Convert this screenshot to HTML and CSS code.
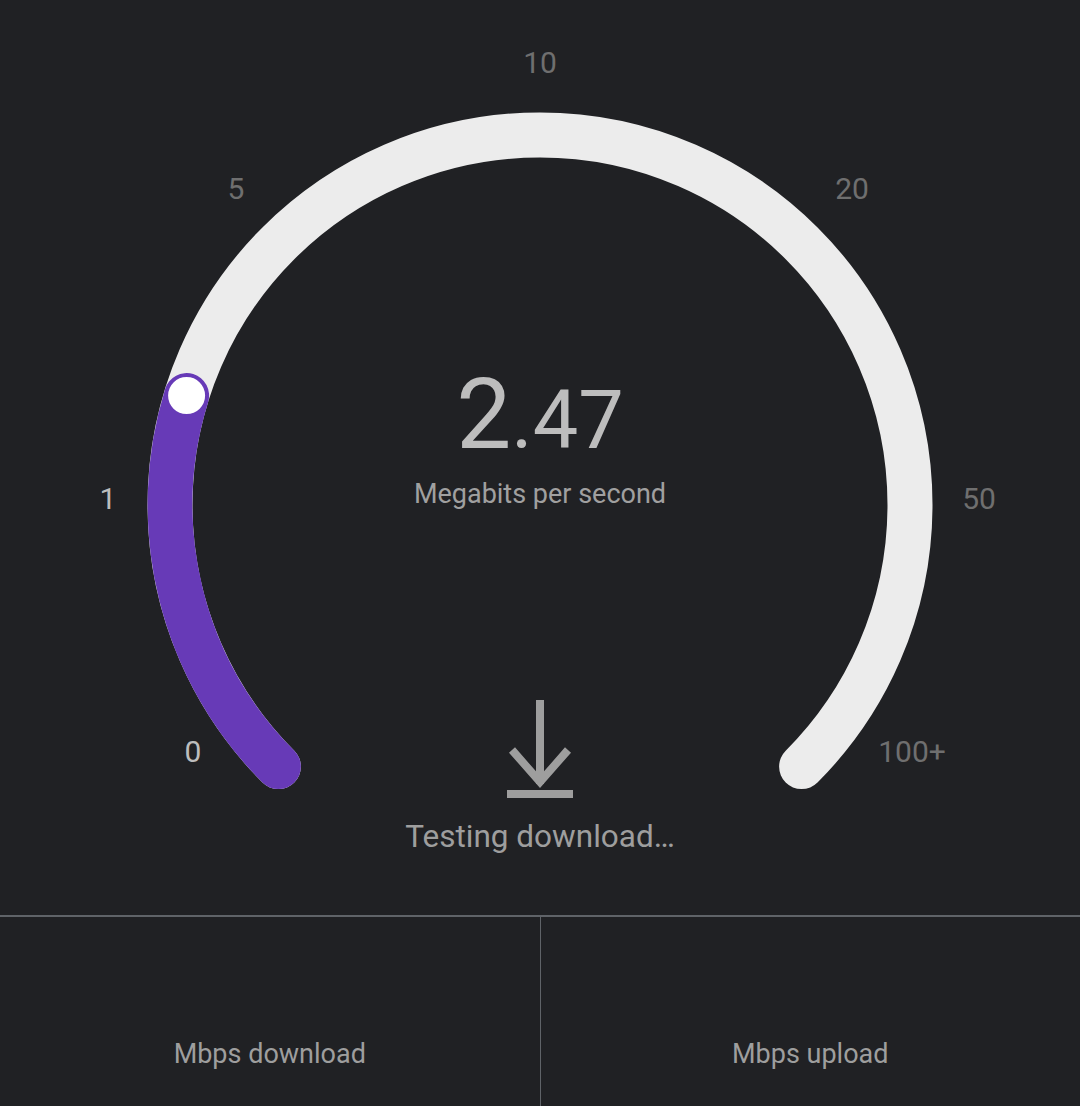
FILE: index.html
```html
<!DOCTYPE html>
<html lang="en">
<head>
    <meta charset="UTF-8">
    <meta name="viewport" content="width=device-width, initial-scale=1.0">
    <title>Speed Test</title>
    <link rel="stylesheet" href="styles.css">
</head>
<body>
    <div class="gauge">
        <svg class="gauge-dial" width="1080" height="915" viewBox="0 0 1080 915">
            <!-- full track: 270 degrees, center 540,505 -->
            <path class="track" d="M278.4 766.6 A370 370 0 1 1 801.6 766.6"/>
            <path class="progress" d="M278.4 766.6 A370 370 0 0 1 186.6 395.6"/>
            <circle class="knob" cx="186.6" cy="395.6" r="19.5"/>
        </svg>

        <div class="scale">
            <span class="tick passed" style="left:193px; top:752px">0</span>
            <span class="tick passed" style="left:108px; top:499px">1</span>
            <span class="tick" style="left:236px; top:189px">5</span>
            <span class="tick" style="left:540px; top:63px">10</span>
            <span class="tick" style="left:852px; top:189px">20</span>
            <span class="tick" style="left:979px; top:499px">50</span>
            <span class="tick" style="left:912px; top:752px">100+</span>
        </div>

        <div class="readout">
            <div class="speed"><span class="speed-int">2</span><span class="speed-dec">.47</span></div>
            <div class="unit">Megabits per second</div>
            <svg class="status-icon" width="66" height="98" viewBox="0 0 66 98">
                <path d="M33 0 V84 M5 50 L33 82 L61 50" fill="none" stroke="#9e9e9e" stroke-width="8"/>
                <rect x="0" y="90" width="66" height="8" fill="#9e9e9e"/>
            </svg>
            <div class="status">Testing download…</div>
        </div>
    </div>

    <div class="results">
        <div class="result">
            <div class="result-label">Mbps download</div>
        </div>
        <div class="result">
            <div class="result-label">Mbps upload</div>
        </div>
    </div>
</body>
</html>
```

FILE: styles.css
```css
* {
    margin: 0;
    padding: 0;
    box-sizing: border-box;
    font-family: Roboto, "Liberation Sans", sans-serif;
}
body {
    background: #202124;
    color: #bdbdbd;
    width: 1080px;
}
.gauge {
    display: grid;
    height: 915px;
    position: relative;
}
.gauge > .gauge-dial,
.gauge > .readout {
    grid-area: 1 / 1;
}
.track {
    fill: none;
    stroke: #ececec;
    stroke-width: 45;
    stroke-linecap: round;
}
.progress {
    fill: none;
    stroke: #673ab7;
    stroke-width: 45;
    stroke-linecap: round;
}
.knob {
    fill: #ffffff;
    stroke: #673ab7;
    stroke-width: 2;
}
.tick {
    position: absolute;
    transform: translate(-50%, -50%);
    font-size: 30px;
    line-height: 1;
    color: #6f6f6f;
}
.tick.passed {
    color: #bdbdbd;
}
.readout {
    display: flex;
    flex-direction: column;
    align-items: center;
    padding-top: 366px;
}
.speed {
    line-height: 98px;
    height: 98px;
    color: #bdbdbd;
}
.speed-int {
    font-size: 98px;
}
.speed-dec {
    font-size: 81px;
}
.unit {
    margin-top: 17px;
    font-size: 27px;
    line-height: 1;
    color: #a0a0a0;
}
.status-icon {
    display: block;
    margin-top: 192px;
}
.status {
    margin-top: 23px;
    font-size: 31.5px;
    line-height: 1;
    color: #9e9e9e;
}
.results {
    display: flex;
    border-top: 2px solid #5f6368;
    height: 191px;
}
.result {
    flex: 1;
    display: flex;
    flex-direction: column;
    align-items: center;
    padding-top: 124px;
}
.result + .result {
    border-left: 1px solid #5f6368;
}
.result-label {
    font-size: 27px;
    line-height: 1;
    color: #9e9e9e;
}
```
